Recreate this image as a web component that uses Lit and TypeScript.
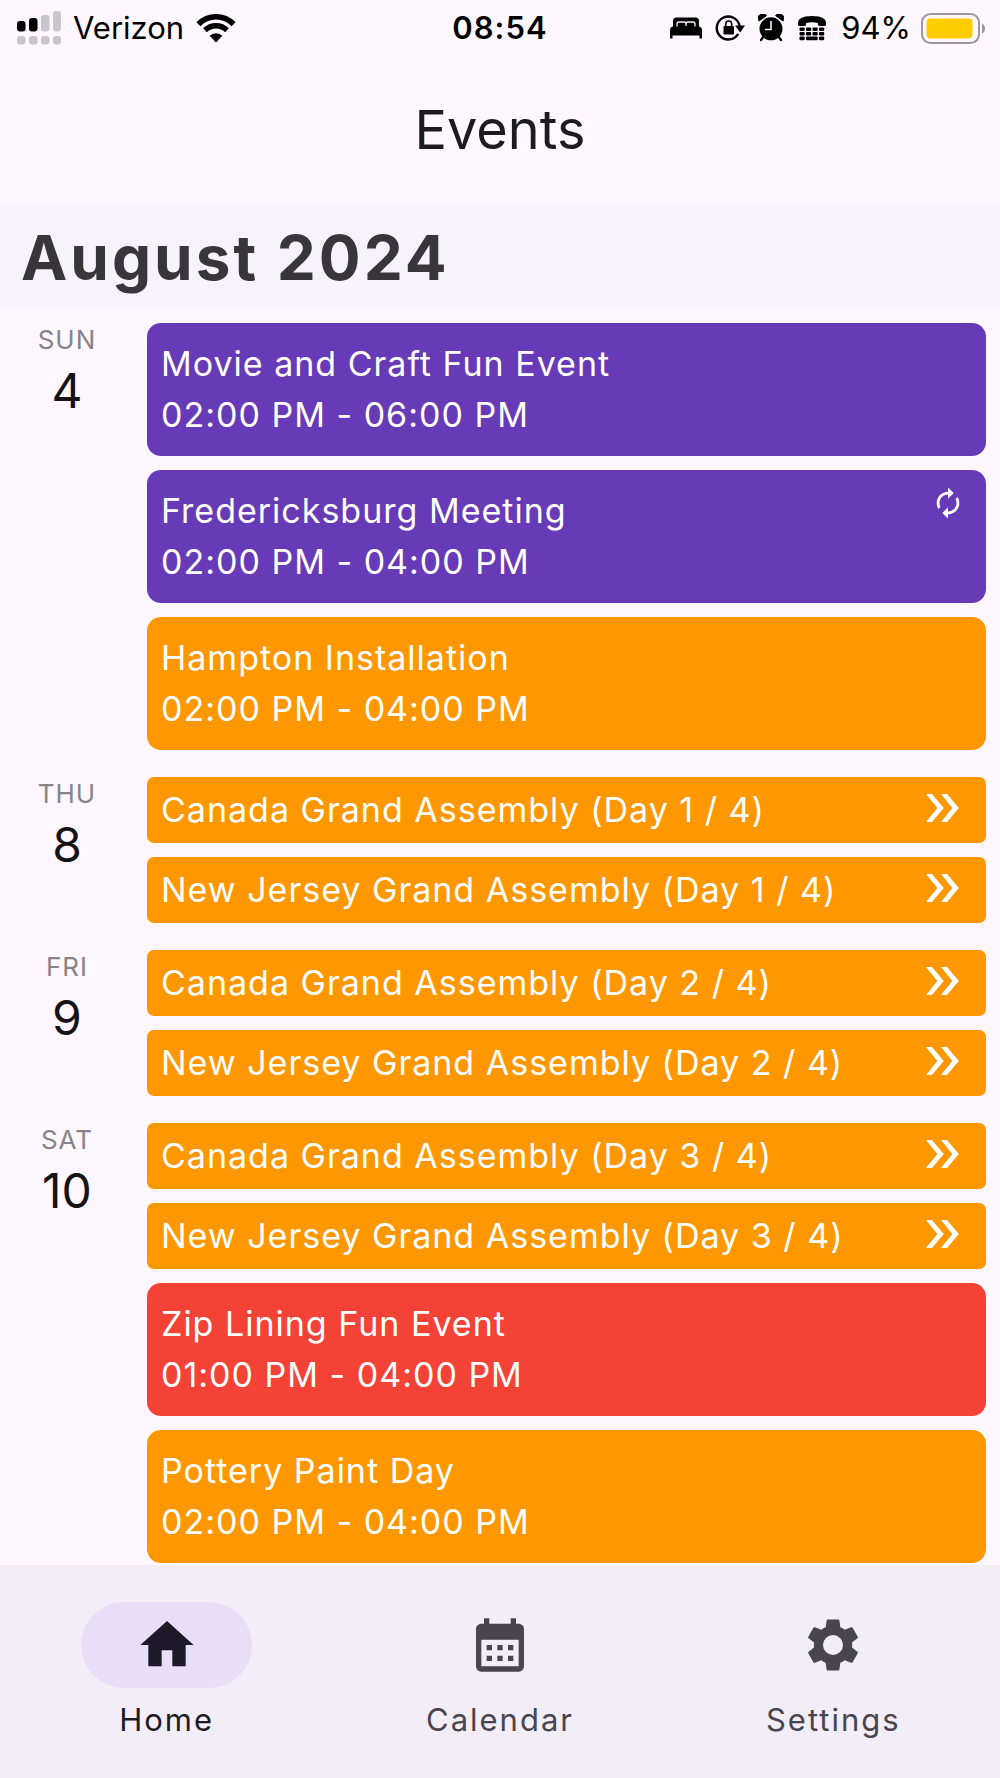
import { LitElement, html, css, svg, nothing } from "lit";
import { customElement, property } from "lit/decorators.js";
import { classMap } from "lit/directives/class-map.js";

type Tone = "purple" | "orange" | "red";

interface EventItem {
  title: string;
  time?: string;
  tone: Tone;
  repeats?: boolean;
}

interface Day {
  weekday: string;
  date: number;
  events: EventItem[];
}

const assemblies = (day: number): EventItem[] => [
  { title: `Canada Grand Assembly (Day ${day} / 4)`, tone: "orange" },
  { title: `New Jersey Grand Assembly (Day ${day} / 4)`, tone: "orange" },
];

const DAYS: Day[] = [
  {
    weekday: "SUN",
    date: 4,
    events: [
      { title: "Movie and Craft Fun Event", time: "02:00 PM - 06:00 PM", tone: "purple" },
      { title: "Fredericksburg Meeting", time: "02:00 PM - 04:00 PM", tone: "purple", repeats: true },
      { title: "Hampton Installation", time: "02:00 PM - 04:00 PM", tone: "orange" },
    ],
  },
  { weekday: "THU", date: 8, events: assemblies(1) },
  { weekday: "FRI", date: 9, events: assemblies(2) },
  {
    weekday: "SAT",
    date: 10,
    events: [
      ...assemblies(3),
      { title: "Zip Lining Fun Event", time: "01:00 PM - 04:00 PM", tone: "red" },
      { title: "Pottery Paint Day", time: "02:00 PM - 04:00 PM", tone: "orange" },
    ],
  },
];

const NAV = [
  { label: "Home", active: true, icon: svg`<path d="M10 20v-6h4v6h5v-8h3L12 3 2 12h3v8z"/>` },
  {
    label: "Calendar",
    active: false,
    icon: svg`<path d="M19 4h-1V2h-2v2H8V2H6v2H5c-1.1 0-2 .9-2 2v14c0 1.1.9 2 2 2h14c1.1 0 2-.9 2-2V6c0-1.1-.9-2-2-2zm0 16H5V10h14v10zM9 14H7v-2h2v2zm4 0h-2v-2h2v2zm4 0h-2v-2h2v2zm-8 4H7v-2h2v2zm4 0h-2v-2h2v2zm4 0h-2v-2h2v2z"/>`,
  },
  {
    label: "Settings",
    active: false,
    icon: svg`<path d="M19.14 12.94c.04-.3.06-.61.06-.94 0-.32-.02-.64-.07-.94l2.03-1.58c.18-.14.23-.41.12-.61l-1.92-3.32c-.12-.22-.37-.29-.59-.22l-2.39.96c-.5-.38-1.03-.7-1.62-.94l-.36-2.54c-.04-.24-.24-.41-.48-.41h-3.84c-.24 0-.43.17-.47.41l-.36 2.54c-.59.24-1.13.57-1.62.94l-2.39-.96c-.22-.08-.47 0-.59.22L2.74 8.87c-.12.21-.08.47.12.61l2.03 1.58c-.05.3-.09.63-.09.94s.02.64.07.94l-2.03 1.58c-.18.14-.23.41-.12.61l1.92 3.32c.12.22.37.29.59.22l2.39-.96c.5.38 1.03.7 1.62.94l.36 2.54c.05.24.24.41.48.41h3.84c.24 0 .44-.17.47-.41l.36-2.54c.59-.24 1.13-.56 1.62-.94l2.39.96c.22.08.47 0 .59-.22l1.92-3.32c.12-.22.07-.47-.12-.61l-2.01-1.58zM12 15.75a3.75 3.75 0 1 1 0-7.5 3.75 3.75 0 0 1 0 7.5z"/>`,
  },
];

@customElement("status-bar")
export class StatusBar extends LitElement {
  static styles = css`
    :host {
      display: block;
      color: #000;
      font-size: 31px;
      line-height: 36px;
    }
    .bar {
      display: grid;
      grid-template-columns: 1fr auto 1fr;
      align-items: center;
      height: 56px;
      padding: 0 15px;
    }
    .side {
      display: flex;
      align-items: center;
      gap: 12px;
    }
    .end {
      justify-content: flex-end;
      gap: 10px;
    }
    .icons {
      display: flex;
      align-items: center;
      gap: 13px;
      margin-right: 4px;
    }
    .time {
      font-weight: 600;
      letter-spacing: 1px;
    }
    svg {
      display: block;
      flex: none;
    }
  `;

  render() {
    return html`
      <div class="bar">
        <div class="side">
          <svg width="46" height="36" viewBox="0 0 46 36" role="img" aria-label="Signal strength">
            <g fill="#000">
              <rect x="2" y="11" width="8.500" height="10.500" rx="3" />
              <rect x="14" y="8" width="8.500" height="13.500" rx="3" />
            </g>
            <g fill="#cac4cd">
              <rect x="26" y="5" width="8.500" height="16.500" rx="3" />
              <rect x="38" y="1" width="8" height="20.500" rx="3" />
              <rect x="2" y="26" width="8.500" height="8.500" rx="3" />
              <rect x="14" y="26" width="8.500" height="8.500" rx="3" />
              <rect x="26" y="26" width="8.500" height="8.500" rx="3" />
              <rect x="38" y="26" width="8" height="8.500" rx="3" />
            </g>
          </svg>
          <span>Verizon</span>
          <svg width="40" height="30" viewBox="0 0 40 30" role="img" aria-label="Wi-Fi">
            <g fill="none" stroke="#000" stroke-width="5.600">
              <path d="M2.400 11.200A24.500 24.500 0 0 1 37.600 11.200" />
              <path d="M9 17.200A16 16 0 0 1 31 17.200" />
            </g>
            <path d="M13.600 22.800A9 9 0 0 1 26.400 22.800L20 29.400z" />
          </svg>
        </div>
        <span class="time">08:54</span>
        <div class="side end">
          <div class="icons">
            <svg width="32" height="22" viewBox="0 0 32 22" role="img" aria-label="Sleep focus">
              <path d="M3 10V4q0-3.500 3.500-3.500h19Q29 0.500 29 4v6z" />
              <path d="M7 10V7q0-2 2-2h5q2 0 2 2 0-2 2-2h5q2 0 2 2v3M16 6v3" fill="none" stroke="#fef7ff" stroke-width="1.300" />
              <path d="M0 21.500V13q0-3.500 3.500-3.500h25Q32 9.500 32 13v8.500h-2.500V18.500h-27v3z" />
            </svg>
            <svg width="30" height="28" viewBox="0 0 30 28" role="img" aria-label="Rotation lock">
              <path d="M23.200 19.800A11.500 11.500 0 1 1 24.600 12" fill="none" stroke="#000" stroke-width="2.400" />
              <path d="M20 11.500h10L25.200 18.500z" />
              <rect x="8.500" y="12" width="10.500" height="8.500" rx="1.200" />
              <path d="M10.700 12.500V10a3 3 0 0 1 6 0v2.500" fill="none" stroke="#000" stroke-width="1.600" />
            </svg>
            <svg width="26" height="28" viewBox="0 0 26 28" role="img" aria-label="Alarm">
              <circle cx="13" cy="14.800" r="11.500" />
              <path d="M1 7A4.600 4.600 0 0 1 8.500 1.600zM25 7A4.600 4.600 0 0 0 17.500 1.600z" stroke="#000" stroke-linejoin="round" />
              <path d="M5.500 22.500 3 26M20.500 22.500 23 26" stroke="#000" stroke-width="2.200" stroke-linecap="round" />
              <path d="M13 7v8.500H7" fill="none" stroke="#fef7ff" stroke-width="1.600" />
            </svg>
            <svg width="30" height="26" viewBox="0 0 30 26" role="img" aria-label="Teletype">
              <path d="M1 9.500Q0 1 15 1t14 8.500q0 1.500-1.500 1.500h-5Q21 11 21 9.500V8q-6-1.500-12 0v1.500Q9 11 7.500 11h-5Q1 11 1 9.500z" />
              <rect x="2.500" y="12.500" width="5.200" height="3.600" rx="1" />
              <rect x="9" y="12.500" width="5.200" height="3.600" rx="1" />
              <rect x="15.500" y="12.500" width="5.200" height="3.600" rx="1" />
              <rect x="22" y="12.500" width="5.200" height="3.600" rx="1" />
              <rect x="2.500" y="17" width="5.200" height="3.600" rx="1" />
              <rect x="9" y="17" width="5.200" height="3.600" rx="1" />
              <rect x="15.500" y="17" width="5.200" height="3.600" rx="1" />
              <rect x="22" y="17" width="5.200" height="3.600" rx="1" />
              <rect x="2.500" y="21.500" width="5.200" height="3.800" rx="1" />
              <rect x="9" y="21.500" width="11.700" height="3.800" rx="1" />
              <rect x="22" y="21.500" width="5.200" height="3.800" rx="1" />
            </svg>
          </div>
          <span>94%</span>
          <svg width="64" height="31" viewBox="0 0 64 31" role="img" aria-label="Battery">
            <rect x="1" y="1" width="57" height="29" rx="8.500" fill="none" stroke="#9b969f" stroke-width="2" />
            <rect x="5.500" y="5.500" width="46" height="20" rx="4" fill="#ffcc00" />
            <path d="M61 10.500q3 1.500 3 5t-3 5z" fill="#9b969f" />
          </svg>
        </div>
      </div>
    `;
  }
}

@customElement("event-card")
export class EventCard extends LitElement {
  @property({ attribute: false }) event!: EventItem;

  static styles = css`
    :host {
      display: block;
    }
    .card {
      display: flex;
      justify-content: space-between;
      width: 100%;
      box-sizing: border-box;
      border: 0;
      margin: 0;
      padding: 15px 21px 16px 14px;
      border-radius: 14px;
      color: #fff;
      font: inherit;
      font-size: 34px;
      line-height: 51px;
      letter-spacing: 1px;
      text-align: left;
      cursor: pointer;
    }
    .compact {
      align-items: center;
      padding-top: 7px;
      padding-bottom: 8px;
      border-radius: 7px;
    }
    .purple {
      background: #673ab7;
    }
    .orange {
      background: #ff9800;
    }
    .red {
      background: #f44336;
    }
    .line {
      display: block;
    }
    svg {
      display: block;
      flex: none;
      fill: currentColor;
    }
  `;

  render() {
    const { title, time, tone, repeats } = this.event;
    return html`
      <button type="button" class=${classMap({ card: true, compact: !time, [tone]: true })}>
        <span>
          <span class="line">${title}</span>
          ${time ? html`<span class="line">${time}</span>` : nothing}
        </span>
        ${repeats
          ? html`<svg width="34" height="36" viewBox="0 0 24 24" role="img" aria-label="Repeats">
              <path
                d="M12 6v3l4-4-4-4v3c-4.420 0-8 3.580-8 8 0 1.570.460 3.030 1.240 4.260L6.700 14.800c-.450-.830-.700-1.790-.700-2.800 0-3.310 2.690-6 6-6zm6.760 1.740L17.300 9.200c.440.840.700 1.790.700 2.800 0 3.310-2.690 6-6 6v-3l-4 4 4 4v-3c4.420 0 8-3.580 8-8 0-1.570-.460-3.030-1.240-4.260z"
              />
            </svg>`
          : nothing}
        ${time
          ? nothing
          : html`<svg width="40" height="34" viewBox="0 0 40 34" role="img" aria-label="Continues">
              <path d="M1 1h6l11.800 14L7 29H1l11.300-14zM16 1h6l11.800 14L22 29h-6l11.300-14z" />
            </svg>`}
      </button>
    `;
  }
}

@customElement("app-root")
export class AppRoot extends LitElement {
  static styles = css`
    :host {
      display: flex;
      flex-direction: column;
      min-height: 100vh;
      background: #fef7ff;
      color: #1d1b20;
      font-family: Inter, "Liberation Sans", sans-serif;
    }
    .title {
      margin: 0;
      padding: 42px 0 41px;
      font-size: 54px;
      font-weight: 400;
      line-height: 64px;
      text-align: center;
    }
    .month {
      margin: 0;
      padding: 15px 21px 11px;
      background: #f7f2fc;
      color: #38363b;
      font-size: 62px;
      font-weight: 700;
      line-height: 80px;
      letter-spacing: 3px;
    }
    .days {
      display: flex;
      flex-direction: column;
      gap: 27px;
      padding: 14px 14px 2px 0;
    }
    .day {
      display: grid;
      grid-template-columns: 134px minmax(0, 1fr);
      column-gap: 13px;
    }
    .label {
      display: flex;
      flex-direction: column;
      align-items: center;
      margin: 0;
      font-weight: 400;
    }
    .weekday {
      color: #88838a;
      font-size: 26px;
      line-height: 34px;
      letter-spacing: 1px;
    }
    .date {
      color: #141316;
      font-size: 48px;
      line-height: 68px;
    }
    .events {
      display: flex;
      flex-direction: column;
      gap: 14px;
    }
    .nav {
      position: sticky;
      bottom: 0;
      display: grid;
      grid-template-columns: repeat(3, 1fr);
      margin-top: auto;
      padding: 37px 0 36px;
      background: #f3edf7;
    }
    .tab {
      display: flex;
      flex-direction: column;
      align-items: center;
      gap: 10px;
      color: #49454f;
      font-size: 31px;
      line-height: 44px;
      letter-spacing: 2px;
      text-decoration: none;
    }
    .active {
      color: #1d1b20;
    }
    .pill {
      display: flex;
      align-items: center;
      justify-content: center;
      width: 171px;
      height: 86px;
      border-radius: 43px;
    }
    .active .pill {
      background: #e8def8;
      color: #1d192b;
    }
    .pill svg {
      display: block;
      fill: currentColor;
    }
  `;

  render() {
    return html`
      <status-bar></status-bar>
      <h1 class="title">Events</h1>
      <main>
        <h2 class="month">August 2024</h2>
        <div class="days">
          ${DAYS.map(
            (day) => html`
              <section class="day">
                <h3 class="label">
                  <span class="weekday">${day.weekday}</span>
                  <span class="date">${day.date}</span>
                </h3>
                <div class="events">
                  ${day.events.map((event) => html`<event-card .event=${event}></event-card>`)}
                </div>
              </section>
            `
          )}
        </div>
      </main>
      <nav class="nav" aria-label="Main">
        ${NAV.map(
          (item) => html`
            <a
              class=${classMap({ tab: true, active: item.active })}
              href="#${item.label.toLowerCase()}"
              aria-current=${item.active ? "page" : nothing}
            >
              <span class="pill">
                <svg width="64" height="64" viewBox="0 0 24 24" aria-hidden="true">${item.icon}</svg>
              </span>
              <span>${item.label}</span>
            </a>
          `
        )}
      </nav>
    `;
  }
}
